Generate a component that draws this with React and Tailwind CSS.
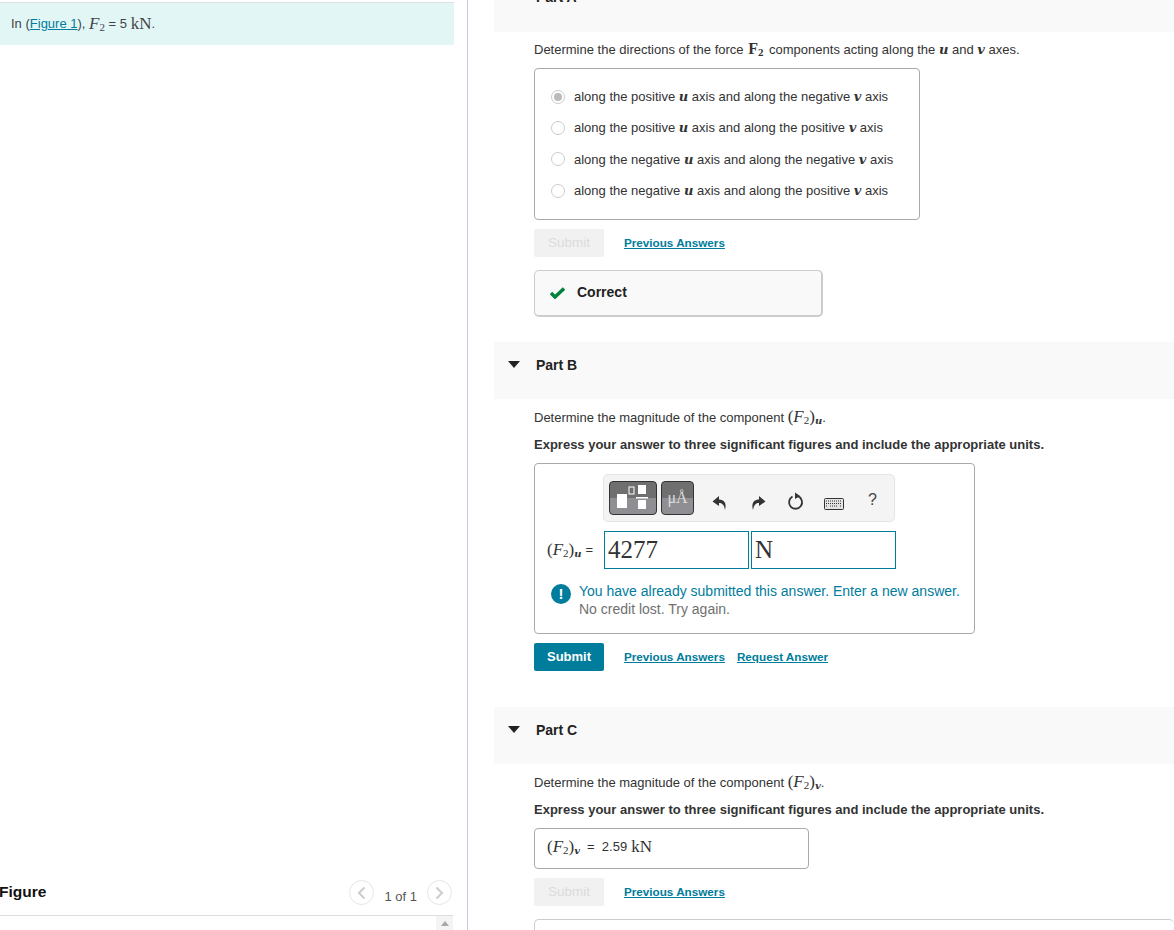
import React from 'react';

const serif = "font-['Liberation_Serif',serif]";

const F2 = ({ sub }) => (
  <span className={`${serif} text-[17px] text-[#333]`}>
    (<i>F</i>
    <span className="text-[11px] relative top-[2px]">2</span>)
    <b className="italic text-[10px] relative top-[2px] font-['DejaVu_Serif',serif]">{sub}</b>
  </span>
);

const MathVar = ({ children }) => (
  <b className="font-['DejaVu_Serif',serif] italic text-[13px] text-[#333]">{children}</b>
);

const Radio = ({ checked, children }) => (
  <div className="flex items-center h-[31.4px] pl-[16px]">
    <span className="w-[14px] h-[14px] rounded-full border border-[#ccc] flex items-center justify-center shrink-0">
      {checked && <span className="w-[8px] h-[8px] rounded-full bg-[#bbb]" />}
    </span>
    <span className="ml-[9px]">{children}</span>
  </div>
);

const PartHeader = ({ title }) => (
  <div className="h-[57px] bg-[#f9f9f9] flex items-start pl-[14px] pt-[14px]">
    <svg width="12" height="7" viewBox="0 0 12 7" className="mt-[5px]">
      <path d="M0 0h12L6 7z" fill="#222" />
    </svg>
    <span className="ml-[16px] font-bold text-[#222] text-[14px] leading-[18px]">{title}</span>
  </div>
);

const Links = ({ request }) => (
  <div className="flex gap-[12px] ml-[20px] text-[11.7px] font-bold text-[#007c9c] underline">
    <span>Previous Answers</span>
    {request && <span>Request Answer</span>}
  </div>
);

const SubmitRow = ({ active, request }) => (
  <div className="flex items-center h-[28px]">
    <div
      className={
        active
          ? 'w-[70px] h-[28px] rounded-[2px] flex items-center justify-center text-[13px] font-bold text-white bg-[#007c9c]'
          : 'w-[70px] h-[28px] rounded-[2px] flex items-center justify-center text-[13.5px] text-[#dcdcdc] bg-[#f1f1f1]'
      }
    >
      Submit
    </div>
    <Links request={request} />
  </div>
);

const Toolbar = () => (
  <div className="w-[292px] h-[48px] ml-[68px] rounded-[5px] border border-[#e4e4e4] bg-[#f4f4f4] flex items-center pl-[5px]">
    <div className="relative w-[48px] h-[34px] rounded-[4px] border border-[#333] bg-[linear-gradient(#6f6f6f_50%,#8f8f93_50%)]">
      <svg width="46" height="32" viewBox="0 0 46 32" className="absolute left-0 top-0">
        <rect x="7" y="12" width="10" height="14" fill="#fff" />
        <rect x="19" y="5" width="5" height="7" fill="none" stroke="#fff" strokeWidth="1" />
        <rect x="28" y="3" width="8" height="9" fill="#fff" />
        <rect x="26" y="15" width="12" height="1.5" fill="#fff" />
        <rect x="28" y="18" width="8" height="9" fill="#fff" />
      </svg>
    </div>
    <div className={`ml-[4px] w-[33px] h-[34px] rounded-[4px] border border-[#333] bg-[linear-gradient(#6f6f6f_50%,#8f8f93_50%)] flex items-center justify-center ${serif} text-[#ddd] text-[16px]`}>
      μÅ
    </div>
    <svg width="16" height="16" viewBox="0 0 16 16" className="ml-[18px] mt-[9px]">
      <path d="M7 1L0.5 6.5 7 11V8c3 0 5 1.5 6 7 2-7-1-10.5-6-10.5z" fill="#333" />
    </svg>
    <svg width="16" height="16" viewBox="0 0 16 16" className="ml-[22px] mt-[9px]">
      <path d="M9 1l6.5 5.5L9 11V8c-3 0-5 1.5-6 7-2-7 1-10.5 6-10.5z" fill="#333" />
    </svg>
    <svg width="18" height="18" viewBox="0 0 18 18" className="ml-[21px] mt-[5px]">
      <path d="M11 4.2A6.5 6.5 0 1 1 5.5 4.5" fill="none" stroke="#333" strokeWidth="1.8" />
      <path d="M8 0.5l5 3.5-5 3z" fill="#333" />
    </svg>
    <svg width="20" height="12" viewBox="0 0 20 12" className="ml-[19px] mt-[12px]">
      <rect x="0.5" y="0.5" width="19" height="11" rx="1" fill="#e4e4e4" stroke="#333" />
      <path d="M2 3h16M2 5.5h16M2 8h2M6 8h8M16 8h2" stroke="#333" strokeWidth="1.2" strokeDasharray="1 1" />
    </svg>
    <span className="ml-[24px] text-[16px] text-[#444] mt-[3px]">?</span>
  </div>
);

export default function App() {
  return (
    <div className="w-[1174px] h-[930px] overflow-hidden flex bg-white font-['Liberation_Sans',Arial,sans-serif] text-[13px] text-[#333]">
      {/* left panel */}
      <div className="relative w-[468px] h-[930px] shrink-0 border-r border-[#c5ced8] flex flex-col pt-[2px]">
        <div className="w-[454px] h-[43px] bg-[#e2f6f6] border-t border-[#e0e0e0] flex items-center pl-[11px] text-[13px] text-[#444]">
          In (<span className="text-[#007c9c] underline">Figure 1</span>),&nbsp;
          <span className={`${serif} text-[17px]`}>
            <i>F</i>
            <span className="text-[11px] relative top-[2px]">2</span>
          </span>
          &nbsp;= 5&nbsp;<span className={`${serif} text-[17px]`}>kN</span>.
        </div>
        <div className="flex-1" />
        <div className="w-[453px] h-[37px] flex items-start justify-between border-b border-[#ddd]">
          <span className="font-bold text-[15.5px] text-[#111] leading-[20px] mt-[3px] -ml-[1px]">Figure</span>
          <div className="flex items-center text-[13px] text-[#555] pr-[1px]">
            <span className="w-[25px] h-[25px] rounded-full border border-[#e6e6e6] flex items-center justify-center">
              <svg width="9" height="14" viewBox="0 0 9 14"><path d="M7.5 1.5L2 7l5.5 5.5" fill="none" stroke="#ccc" strokeWidth="2" /></svg>
            </span>
            <span className="mx-[10px] mt-[8px]">1 of 1</span>
            <span className="w-[25px] h-[25px] rounded-full border border-[#e6e6e6] flex items-center justify-center">
              <svg width="9" height="14" viewBox="0 0 9 14"><path d="M1.5 1.5L7 7l-5.5 5.5" fill="none" stroke="#ccc" strokeWidth="2" /></svg>
            </span>
          </div>
        </div>
        <div className="w-[453px] h-[14px] flex justify-end">
          <div className="w-[17px] h-[14px] bg-[#f4f4f4] flex items-center justify-center">
            <svg width="8" height="5" viewBox="0 0 8 5"><path d="M0 5L4 0l4 5z" fill="#a8a8a8" /></svg>
          </div>
        </div>
      </div>

      {/* right panel, scrolled so Part A's heading is cut by the top of the page */}
      <div className="flex-1 pl-[26px] min-w-0">
        <div className="h-[32px] bg-[#f9f9f9] overflow-hidden pl-[42px]">
          <div className="-mt-[12px] font-bold text-[#222] text-[14px] leading-[18px]">Part A</div>
        </div>

        <div className="pl-[40px]">
          <p className="mt-[8px] h-[18px] leading-[18px]">
            Determine the directions of the force <b className={`${serif} text-[16px] ml-[1px] mr-[2px]`}>F<span className="text-[11px] relative top-[2px]">2</span></b> components acting along the <MathVar>u</MathVar> and <MathVar>v</MathVar> axes.
          </p>
          <div className="mt-[10px] w-[386px] h-[152px] rounded-[4px] border border-[#aaa] pt-[11.9px]">
            <Radio checked>along the positive <MathVar>u</MathVar> axis and along the negative <MathVar>v</MathVar> axis</Radio>
            <Radio>along the positive <MathVar>u</MathVar> axis and along the positive <MathVar>v</MathVar> axis</Radio>
            <Radio>along the negative <MathVar>u</MathVar> axis and along the negative <MathVar>v</MathVar> axis</Radio>
            <Radio>along the negative <MathVar>u</MathVar> axis and along the positive <MathVar>v</MathVar> axis</Radio>
          </div>
          <div className="mt-[9px]">
            <SubmitRow />
          </div>
          <div className="mt-[13px] w-[289px] h-[47px] rounded-[5px] border border-[#ccc] border-r-2 border-b-2 bg-[#f9f9f9] flex items-center pl-[15px] pb-[1px]">
            <svg width="15" height="12" viewBox="0 0 15 12">
              <path d="M1 6l4 4 9-8.5" fill="none" stroke="#00843d" strokeWidth="3.5" />
            </svg>
            <span className="ml-[12px] font-bold text-[#222] text-[14px]">Correct</span>
          </div>
        </div>

        <div className="mt-[25px]">
          <PartHeader title="Part B" />
        </div>
        <div className="pl-[40px]">
          <p className="mt-[9px] h-[18px] leading-[18px]">
            Determine the magnitude of the component <F2 sub="u" />.
          </p>
          <p className="mt-[10px] h-[18px] leading-[18px] font-bold text-[13px]">
            Express your answer to three significant figures and include the appropriate units.
          </p>
          <div className="mt-[9px] w-[441px] h-[171px] rounded-[4px] border border-[#aaa] pt-[10px]">
            <Toolbar />
            <div className="flex items-center mt-[9px] h-[38px] pl-[12px]">
              <div className="w-[57px] flex items-center shrink-0">
                <F2 sub="u" />
                <span className="ml-[4px]">=</span>
              </div>
              <div className={`w-[145px] h-[38px] border border-[#007c9c] flex items-center pl-[3px] ${serif} text-[25px] text-[#333]`}>4277</div>
              <div className={`ml-[2px] w-[145px] h-[38px] border border-[#007c9c] flex items-center pl-[3px] ${serif} text-[25px] text-[#333]`}>N</div>
            </div>
            <div className="flex mt-[14px] pl-[16px] text-[14px] leading-[18px]">
              <span className="w-[20px] h-[20px] mt-[1px] rounded-full bg-[#007c9c] text-white font-bold text-[15px] flex items-center justify-center shrink-0">!</span>
              <div className="ml-[8px] -mt-[1px]">
                <div className="text-[#007c9c]">You have already submitted this answer. Enter a new answer.</div>
                <div className="text-[#707070]">No credit lost. Try again.</div>
              </div>
            </div>
          </div>
          <div className="mt-[9px]">
            <SubmitRow active request />
          </div>
        </div>

        <div className="mt-[36px]">
          <PartHeader title="Part C" />
        </div>
        <div className="pl-[40px]">
          <p className="mt-[9px] h-[18px] leading-[18px]">
            Determine the magnitude of the component <F2 sub="v" />.
          </p>
          <p className="mt-[10px] h-[18px] leading-[18px] font-bold text-[13px]">
            Express your answer to three significant figures and include the appropriate units.
          </p>
          <div className="mt-[9px] w-[275px] h-[41px] rounded-[4px] border border-[#aaa] flex items-center pl-[12px] pb-[3px]">
            <F2 sub="v" />
            <span className="ml-[7px]">=&nbsp; 2.59</span>
            <span className={`${serif} text-[17px] ml-[4px]`}>kN</span>
          </div>
          <div className="mt-[9px]">
            <SubmitRow />
          </div>
          <div className="mt-[13px] h-[40px] rounded-t-[5px] border border-[#ccc] border-r-0" />
        </div>
      </div>
    </div>
  );
}
